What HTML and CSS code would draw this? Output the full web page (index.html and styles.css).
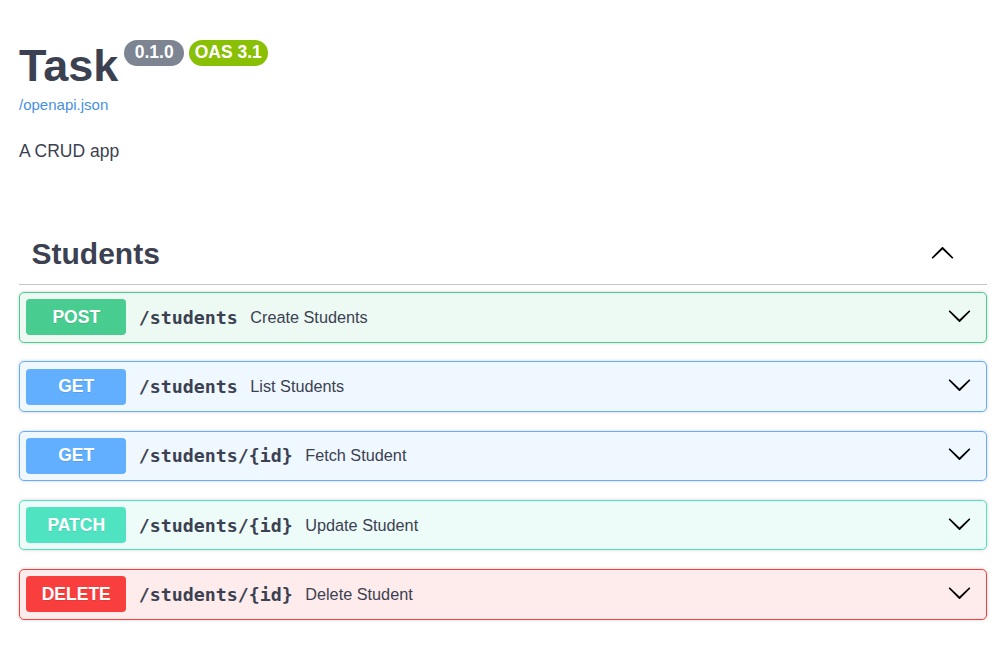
FILE: index.html
```html
<!DOCTYPE html>
<html lang="en">
<head>
<meta charset="utf-8">
<title>Task - Swagger UI</title>
<link rel="stylesheet" href="styles.css">
</head>
<body>
<div class="wrapper">
  <div class="info">
    <div class="title-row">
      <h2 class="title">Task</h2>
      <span class="stamp version">0.1.0</span>
      <span class="stamp oas">OAS 3.1</span>
    </div>
    <a class="spec-link" href="#">/openapi.json</a>
    <p class="desc">A CRUD app</p>
  </div>

  <div class="tag-section">
    <div class="tag-header">
      <h3 class="tag-name">Students</h3>
      <svg class="arrow up" viewBox="0 0 20 20" width="25" height="25"><path d="M17.418 6.109c.272-.268.709-.268.979 0s.271.701 0 .969l-7.908 7.83c-.27.268-.707.268-.979 0l-7.908-7.830c-.27-.268-.27-.701 0-.969.271-.268.709-.268.979 0L10 13.25l7.418-7.141z" transform="rotate(180 10 10)"/></svg>
    </div>

    <div class="opblock post">
      <span class="method">POST</span>
      <span class="path">/students</span>
      <span class="summary">Create Students</span>
      <svg class="arrow" viewBox="0 0 20 20" width="25" height="25"><path d="M17.418 6.109c.272-.268.709-.268.979 0s.271.701 0 .969l-7.908 7.83c-.27.268-.707.268-.979 0l-7.908-7.83c-.27-.268-.27-.701 0-.969.271-.268.709-.268.979 0L10 13.25l7.418-7.141z"/></svg>
    </div>

    <div class="opblock get">
      <span class="method">GET</span>
      <span class="path">/students</span>
      <span class="summary">List Students</span>
      <svg class="arrow" viewBox="0 0 20 20" width="25" height="25"><path d="M17.418 6.109c.272-.268.709-.268.979 0s.271.701 0 .969l-7.908 7.83c-.27.268-.707.268-.979 0l-7.908-7.83c-.27-.268-.27-.701 0-.969.271-.268.709-.268.979 0L10 13.25l7.418-7.141z"/></svg>
    </div>

    <div class="opblock get">
      <span class="method">GET</span>
      <span class="path">/students/{id}</span>
      <span class="summary">Fetch Student</span>
      <svg class="arrow" viewBox="0 0 20 20" width="25" height="25"><path d="M17.418 6.109c.272-.268.709-.268.979 0s.271.701 0 .969l-7.908 7.83c-.27.268-.707.268-.979 0l-7.908-7.83c-.27-.268-.27-.701 0-.969.271-.268.709-.268.979 0L10 13.25l7.418-7.141z"/></svg>
    </div>

    <div class="opblock patch">
      <span class="method">PATCH</span>
      <span class="path">/students/{id}</span>
      <span class="summary">Update Student</span>
      <svg class="arrow" viewBox="0 0 20 20" width="25" height="25"><path d="M17.418 6.109c.272-.268.709-.268.979 0s.271.701 0 .969l-7.908 7.83c-.27.268-.707.268-.979 0l-7.908-7.83c-.27-.268-.27-.701 0-.969.271-.268.709-.268.979 0L10 13.25l7.418-7.141z"/></svg>
    </div>

    <div class="opblock delete">
      <span class="method">DELETE</span>
      <span class="path">/students/{id}</span>
      <span class="summary">Delete Student</span>
      <svg class="arrow" viewBox="0 0 20 20" width="25" height="25"><path d="M17.418 6.109c.272-.268.709-.268.979 0s.271.701 0 .969l-7.908 7.83c-.27.268-.707.268-.979 0l-7.908-7.83c-.27-.268-.27-.701 0-.969.271-.268.709-.268.979 0L10 13.25l7.418-7.141z"/></svg>
    </div>
  </div>
</div>
</body>
</html>
```
FILE: styles.css
```css
html, body {
  margin: 0;
  padding: 0;
  background: #fff;
}

body {
  font-family: "Liberation Sans", Arial, sans-serif;
  color: #3b4151;
}

.wrapper {
  padding: 40px 19px 0 19px;
}

/* info block */
.title-row {
  display: flex;
  align-items: flex-start;
}

.title {
  margin: 0;
  font-size: 45px;
  line-height: 52px;
  font-weight: 700;
  color: #3b4151;
}

.stamp {
  display: inline-flex;
  align-items: center;
  height: 26px;
  margin-top: -0.5px;
  border-radius: 71px;
  color: #fff;
  font-size: 17.5px;
  font-weight: 700;
  box-sizing: border-box;
}

.stamp.version {
  background: #7d8492;
  margin-left: 6px;
  padding: 0 10.5px;
}

.stamp.oas {
  background: #89bf04;
  margin-left: 4.5px;
  padding: 0 6px;
}

.spec-link {
  display: block;
  margin-top: 4px;
  font-size: 15px;
  line-height: 17px;
  color: #4990e2;
  text-decoration: none;
}

.desc {
  margin: 27.5px 0 0;
  font-size: 17.5px;
  line-height: 20px;
  color: #3b4151;
}

/* tag section */
.tag-section {
  margin-top: 62.5px;
}

.tag-header {
  display: flex;
  align-items: center;
  padding: 13.5px 32px 13px 12.5px;
  border-bottom: 1px solid #c4c6cb;
  margin-bottom: 7px;
}

.tag-name {
  flex: 1;
  margin: 0;
  font-size: 30px;
  line-height: 34.5px;
  font-weight: 700;
  color: #3b4151;
}

.arrow {
  flex: none;
  fill: #000;
}

.arrow.up {
  margin-bottom: 1px;
}

/* operation blocks */
.opblock {
  display: flex;
  align-items: center;
  padding: 6.25px;
  border: 1px solid #000;
  border-radius: 5px;
  margin-bottom: 18.75px;
  box-shadow: 0 0 3.75px rgba(0, 0, 0, 0.19);
}

.method {
  flex: none;
  width: 100px;
  height: 36px;
  display: flex;
  align-items: center;
  justify-content: center;
  border-radius: 3.75px;
  color: #fff;
  font-size: 17.5px;
  font-weight: 700;
  text-shadow: 0 1px 0 rgba(0, 0, 0, 0.1);
}

.path {
  flex: none;
  padding: 0 12.5px;
  font-family: "DejaVu Sans Mono", "Liberation Mono", monospace;
  font-size: 18.27px;
  font-weight: 700;
  color: #3b4151;
}

.summary {
  flex: 1;
  font-size: 16.25px;
  color: #3b4151;
}

.opblock .arrow {
  margin-right: 7.75px;
  margin-bottom: 4px;
}

.opblock.post {
  background: #edfaf4;
  border-color: #49cc90;
}
.opblock.post .method { background: #49cc90; }

.opblock.get {
  background: #eff7ff;
  border-color: #61affe;
}
.opblock.get .method { background: #61affe; }

.opblock.patch {
  background: #edfcf9;
  border-color: #50e3c2;
}
.opblock.patch .method { background: #50e3c2; }

.opblock.delete {
  background: #feecec;
  border-color: #f93e3e;
}
.opblock.delete .method { background: #f93e3e; }
```
